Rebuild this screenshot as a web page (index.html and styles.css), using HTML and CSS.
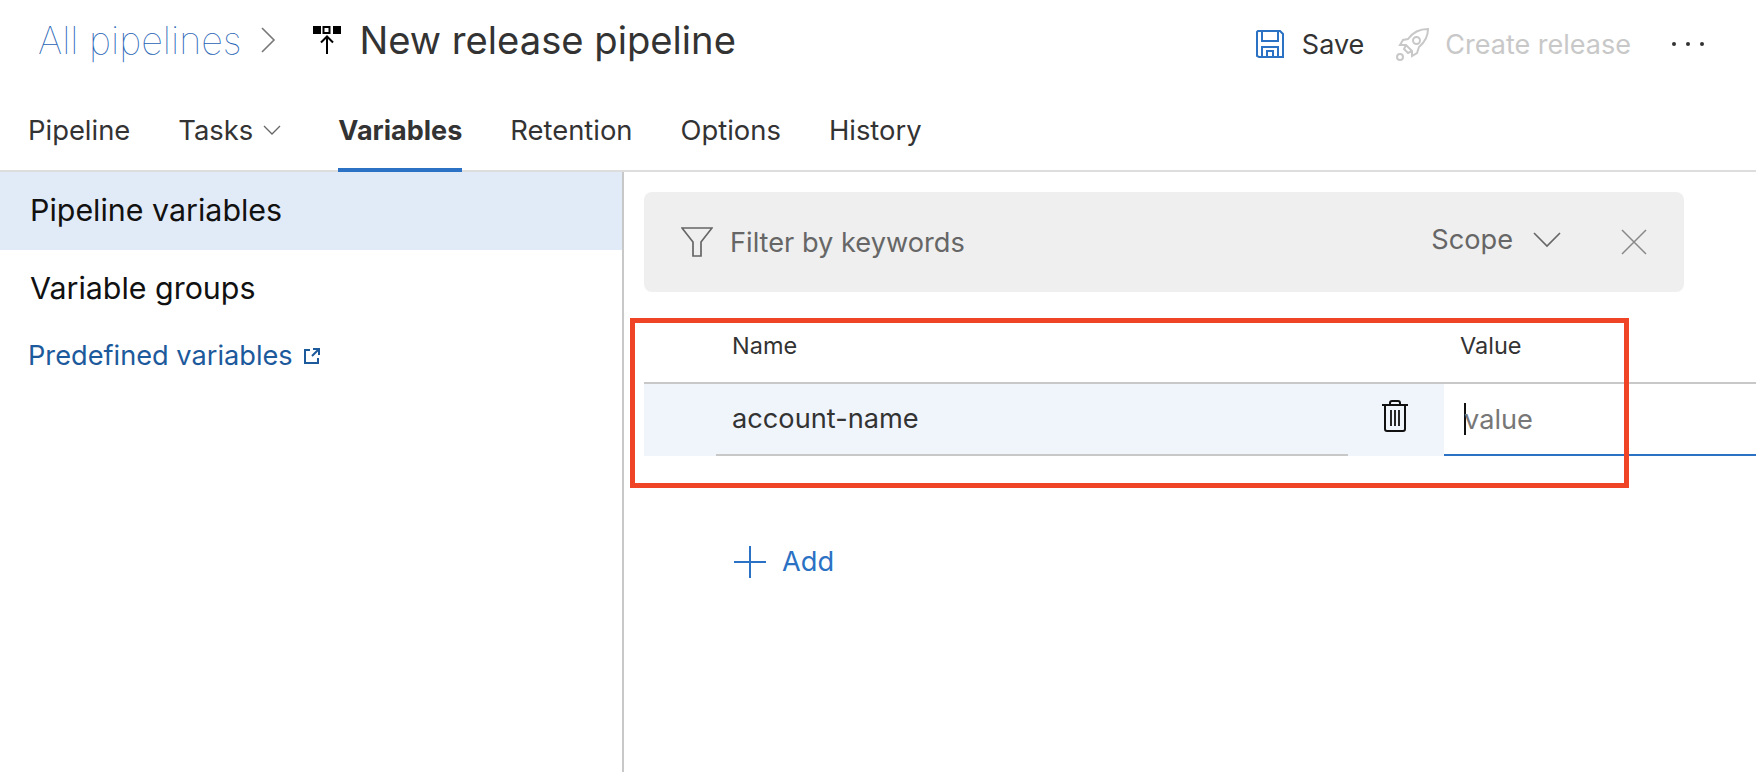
FILE: index.html
```html
<!DOCTYPE html>
<html lang="en">
<head>
    <meta charset="UTF-8">
    <title>New release pipeline</title>
    <link rel="stylesheet" href="styles.css">
</head>
<body>

    <!-- Title bar -->
    <div class="topbar">
        <a class="crumb">All pipelines</a>
        <svg class="crumb-arrow" width="16" height="28" viewBox="0 0 16 28"><path d="M2 2l12 12L2 26" fill="none" stroke="#777" stroke-width="1.6"/></svg>
        <svg class="pipe-icon" width="30" height="30" viewBox="0 0 30 30">
            <rect x="1" y="1" width="8" height="8" fill="#000"/>
            <rect x="11.5" y="2" width="6" height="6" fill="none" stroke="#000" stroke-width="2"/>
            <rect x="21" y="1" width="8" height="8" fill="#000"/>
            <path d="M15 29V12M9 17.500l6-6 6 6" fill="none" stroke="#000" stroke-width="2"/>
        </svg>
        <h1 class="title">New release pipeline</h1>
        <div class="actions">
            <button class="action">
                <svg width="28" height="28" viewBox="0 0 28 28" fill="none" stroke="#2b71c4" stroke-width="2"><path d="M2 1h22l3 3v23H3l-2-1V2zM6 1v10h16V1M6 27V17h16v10M11 27v-6h6v6"/></svg>
                Save
            </button>
            <button class="action disabled">
                <svg width="34" height="34" viewBox="0 0 34 34" fill="none" stroke="#c8c8c8" stroke-width="2"><path d="M32 2c-9 0-15 3-20 10l-5 1-3 5 6 0 6 6v5l5-3 2-6c6-5 9-10 9-18zM10 18l-2 4 4 4 4-2"/><circle cx="20.500" cy="13.500" r="3.500"/><circle cx="4" cy="30" r="3"/></svg>
                Create release
            </button>
            <div class="more"><span></span><span></span><span></span></div>
        </div>
    </div>

    <!-- Tabs -->
    <div class="tabs">
        <div class="tab">Pipeline</div>
        <div class="tab tab-menu">Tasks
            <svg width="18" height="10" viewBox="0 0 18 10"><path d="M1 1l8 8 8-8" fill="none" stroke="#666" stroke-width="1.300"/></svg>
        </div>
        <div class="tab active">Variables</div>
        <div class="tab">Retention</div>
        <div class="tab">Options</div>
        <div class="tab">History</div>
    </div>

    <div class="main">
        <!-- Left menu -->
        <div class="sidebar">
            <div class="side-item selected">Pipeline variables</div>
            <div class="side-item">Variable groups</div>
            <a class="side-link">Predefined variables
                <svg width="16" height="16" viewBox="0 0 16 16" fill="none" stroke="#1d5a9c" stroke-width="2"><path d="M6 2H1v13h13v-5M8 8l6-6M9 1h6v6"/></svg>
            </a>
        </div>

        <div class="content">
            <!-- Filter -->
            <div class="filter">
                <svg width="32" height="30" viewBox="0 0 32 30" fill="none" stroke="#666" stroke-width="1.700"><path d="M1 1h30L20 15v14h-8V15z"/></svg>
                <span class="filter-text">Filter by keywords</span>
                <span class="scope">Scope</span>
                <svg class="scope-arrow" width="28" height="16" viewBox="0 0 28 16"><path d="M1 1l13 13L27 1" fill="none" stroke="#666" stroke-width="1.600"/></svg>
                <svg class="clear" width="26" height="26" viewBox="0 0 26 26"><path d="M1 1l24 24M25 1L1 25" fill="none" stroke="#888" stroke-width="1.500"/></svg>
            </div>

            <!-- Variables table -->
            <div class="table">
                <div class="head">
                    <div class="head-name">Name</div>
                    <div class="head-value">Value</div>
                </div>
                <div class="row">
                    <div class="cell-name">
                        <div class="name-input">account-name</div>
                        <svg class="trash" width="26" height="32" viewBox="0 0 26 32" fill="none" stroke="#111" stroke-width="2"><path d="M0 5h26M8 5V3q0-2 2-2h6q2 0 2 2v2M3 5v24q0 2 2 2h16q2 0 2-2V5"/><path d="M9 10v16M13 10v16M17 10v16" stroke-width="1.800"/></svg>
                    </div>
                    <div class="cell-value"><i class="caret"></i><span class="placeholder">value</span></div>
                </div>
            </div>

            <div class="add">
                <svg width="32" height="32" viewBox="0 0 32 32"><path d="M16 0v32M0 16h32" stroke="#2b71c4" stroke-width="2"/></svg>
                Add
            </div>
        </div>
    </div>

    <!-- Red annotation drawn over the table -->
    <div class="marker"></div>

</body>
</html>
```

FILE: styles.css
```css
body {
    margin: 0;
    height: 772px;
    overflow: hidden;
    background: white;
    color: #333;
    font-family: Inter, "Open Sans", sans-serif;
    position: relative;
}
.topbar {
    height: 80px;
    display: flex;
    align-items: center;
    padding-left: 38px;
}
.crumb {
    font-size: 37.8px;
    font-weight: 100;
    color: #1e62b4;
}
.crumb-arrow {
    margin-left: 18px;
}
.pipe-icon {
    margin-left: 36px;
}
.title {
    margin: 0 0 0 18px;
    font-size: 38.2px;
    font-weight: 400;
    color: #333;
}
.actions {
    margin-left: auto;
    padding-right: 52px;
    padding-top: 8px;
    display: flex;
    align-items: center;
}
.action {
    display: flex;
    align-items: center;
    gap: 18px;
    margin-right: 32px;
    padding: 0;
    border: none;
    background: none;
    color: #333;
    font-family: inherit;
    font-size: 27px;
}
.action.disabled {
    color: #c8c8c8;
    gap: 15px;
    margin-right: 41px;
}
.more {
    display: flex;
    gap: 10px;
}
.more span {
    width: 4px;
    height: 4px;
    border-radius: 50%;
    background: #333;
}
.tabs {
    height: 90px;
    display: flex;
    gap: 48px;
    padding-left: 28px;
    border-bottom: 2px solid #ddd;
}
.tab {
    display: flex;
    align-items: center;
    gap: 10px;
    font-size: 27.4px;
    padding-top: 12px;
    margin-bottom: -2px;
    box-sizing: border-box;
    border-bottom: 4px solid transparent;
}
.tab-menu {
    margin-right: 9px;
}
.tab.active {
    font-size: 27px;
    font-weight: 700;
    border-bottom-color: #2b71c4;
}
.main {
    display: flex;
    height: 600px;
}
.sidebar {
    width: 622px;
    border-right: 2px solid #c8c8c8;
}
.side-item {
    height: 78px;
    box-sizing: border-box;
    padding: 0 0 2px 30px;
    display: flex;
    align-items: center;
    font-size: 30.4px;
    color: #111;
}
.side-item.selected {
    background: #e1ebf7;
}
.side-link {
    display: flex;
    align-items: center;
    gap: 11px;
    margin-top: 11px;
    padding-left: 28px;
    font-size: 27.2px;
    color: #1d5a9c;
}
.content {
    flex: 1;
    padding: 20px 0 0 20px;
}
.filter {
    width: 1040px;
    height: 100px;
    box-sizing: border-box;
    padding: 0 37px 0 37px;
    display: flex;
    align-items: center;
    background: #efefef;
    border-radius: 8px;
    color: #666;
    font-size: 27.2px;
}
.filter-text {
    margin-left: 17px;
    flex: 1;
}
.scope {
    margin-top: -6px;
}
.scope-arrow {
    margin: -4px 0 0 20px;
}
.clear {
    margin-left: 60px;
}
.table {
    margin-top: 26px;
}
.head {
    height: 64px;
    display: flex;
    font-size: 23.5px;
    border-bottom: 2px solid #c8c8c8;
}
.head-name {
    width: 816px;
    padding: 13px 0 0 88px;
    box-sizing: border-box;
}
.head-value {
    padding-top: 13px;
}
.row {
    display: flex;
    height: 72px;
}
.cell-name {
    width: 800px;
    display: flex;
    background: #f0f5fc;
    padding-left: 72px;
    box-sizing: border-box;
}
.name-input {
    width: 632px;
    box-sizing: border-box;
    padding-left: 16px;
    line-height: 70px;
    font-size: 27.2px;
    border-bottom: 2px solid #c8c8c8;
}
.trash {
    margin: 16px 0 0 34px;
}
.cell-value {
    flex: 1;
    display: flex;
    align-items: center;
    padding-left: 20px;
    border-bottom: 2px solid #2b71c4;
    font-size: 27.2px;
    color: #777;
}
.caret {
    width: 2px;
    height: 32px;
    background: #111;
    margin-right: -2px;
}
.add {
    display: flex;
    align-items: center;
    gap: 16px;
    margin: 89px 0 0 90px;
    font-size: 27.2px;
    color: #2b71c4;
}
.marker {
    position: absolute;
    left: 630px;
    top: 318px;
    width: 999px;
    height: 170px;
    box-sizing: border-box;
    border: 5px solid #ef4526;
}
```
